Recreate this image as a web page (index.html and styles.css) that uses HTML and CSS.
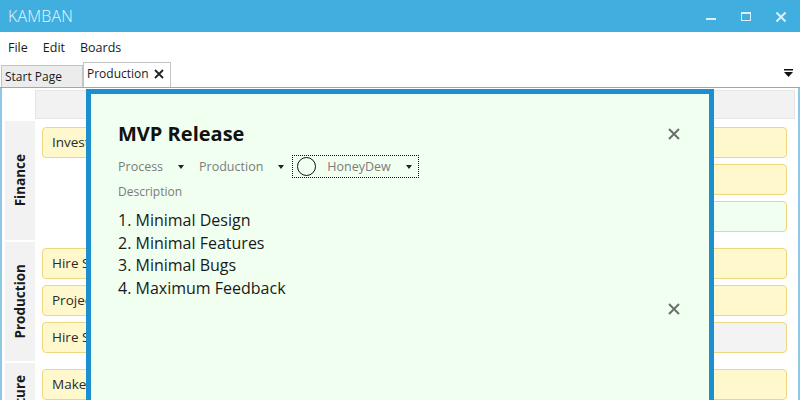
FILE: index.html
```html
<!DOCTYPE html>
<html lang="en">
<head>
    <meta charset="UTF-8">
    <title>Kamban</title>
    <link rel="stylesheet" href="styles.css">
</head>
<body>

    <div class="titlebar">
        <span class="app-name">KAMBAN</span>
        <div class="win-controls">
            <svg width="12" height="12" viewBox="0 0 12 12"><rect x="1" y="7" width="10" height="2" fill="#dcf0fa"/></svg>
            <svg width="12" height="12" viewBox="0 0 12 12"><rect x="1.5" y="1.5" width="9" height="8" fill="none" stroke="#dcf0fa"/><rect x="1" y="1" width="10" height="2" fill="#dcf0fa"/></svg>
            <svg width="12" height="12" viewBox="0 0 12 12"><path d="M1.5 1.5 L10.5 10.5 M10.5 1.5 L1.5 10.5" stroke="#dcf0fa" stroke-width="2"/></svg>
        </div>
    </div>

    <div class="menubar">
        <span>File</span>
        <span>Edit</span>
        <span>Boards</span>
    </div>

    <div class="tabstrip">
        <div class="tab">Start Page</div>
        <div class="tab active">Production
            <svg width="10" height="10" viewBox="0 0 10 10"><path d="M1 1 L9 9 M9 1 L1 9" stroke="#222" stroke-width="1.8"/></svg>
        </div>
        <div class="tab-overflow">
            <svg width="9" height="8" viewBox="0 0 9 8"><rect x="0" y="0" width="9" height="1.5" fill="#111"/><path d="M0 3 L9 3 L4.5 8 Z" fill="#111"/></svg>
        </div>
    </div>

    <div class="board">
        <div class="board-head">
            <div class="corner"></div>
            <div class="col-head"></div>
        </div>

        <div class="lane">
            <div class="lane-label"><span>Finance</span></div>
            <div class="cell">
                <div class="card">Investors meeting</div>
            </div>
            <div class="cell">
                <div class="card">Budget review</div>
            </div>
            <div class="cell">
                <div class="card">Quarterly report</div>
                <div class="card">Pay invoices</div>
                <div class="card honeydew">MVP Release</div>
            </div>
        </div>

        <div class="lane">
            <div class="lane-label"><span>Production</span></div>
            <div class="cell">
                <div class="card">Hire Staff</div>
                <div class="card">Project plan</div>
                <div class="card">Hire Support</div>
            </div>
            <div class="cell">
                <div class="card">Prototype</div>
            </div>
            <div class="cell">
                <div class="card">Testing</div>
                <div class="card">Deploy</div>
                <div class="card gray">Documentation</div>
            </div>
        </div>

        <div class="lane short">
            <div class="lane-label"><span>Future</span></div>
            <div class="cell">
                <div class="card">Make roadmap</div>
            </div>
            <div class="cell"></div>
            <div class="cell">
                <div class="card">Version 2</div>
            </div>
        </div>

        <div class="modal">
            <div class="modal-head">
                <h1>MVP Release</h1>
                <button class="close-btn">
                    <svg width="12" height="12" viewBox="0 0 12 12"><path d="M1 1 L11 11 M11 1 L1 11" stroke="#6e6e6e" stroke-width="2"/></svg>
                </button>
            </div>

            <div class="selectors">
                <div class="select">Process <span class="arrow"></span></div>
                <div class="select">Production <span class="arrow"></span></div>
                <div class="select color-pick">
                    <span class="swatch"></span>
                    HoneyDew <span class="arrow"></span>
                </div>
            </div>

            <div class="field-label">Description</div>

            <div class="desc-row">
                <ol class="desc">
                    <li>Minimal Design</li>
                    <li>Minimal Features</li>
                    <li>Minimal Bugs</li>
                    <li>Maximum Feedback</li>
                </ol>
                <button class="close-btn bottom">
                    <svg width="12" height="12" viewBox="0 0 12 12"><path d="M1 1 L11 11 M11 1 L1 11" stroke="#6e6e6e" stroke-width="2"/></svg>
                </button>
            </div>
        </div>
    </div>

</body>
</html>
```

FILE: styles.css
```css
body {
    margin: 0;
    width: 800px;
    height: 400px;
    overflow: hidden;
    font-family: "Open Sans", "Noto Sans", sans-serif;
    color: #1a1a1a;
    background: #ffffff;
}
.titlebar {
    height: 32px;
    background: #41aee0;
    display: flex;
    align-items: center;
    justify-content: space-between;
    padding-left: 8px;
}
.app-name {
    color: #e6f6ff;
    font-size: 16px;
    font-weight: 300;
    letter-spacing: 0.2px;
}
.win-controls {
    display: flex;
    gap: 23px;
    padding-right: 13px;
    padding-top: 2px;
}
.menubar {
    height: 30px;
    display: flex;
    align-items: center;
    gap: 15px;
    padding-left: 8px;
    font-size: 12.5px;
}
.tabstrip {
    height: 25px;
    display: flex;
    align-items: flex-end;
    border-bottom: 1px solid #a6a6a6;
    position: relative;
}
.tab {
    height: 22px;
    box-sizing: border-box;
    padding: 0 20px 0 3px;
    font-size: 12px;
    line-height: 22px;
    background: #ececec;
    border: 1px solid #c4c4c4;
    border-bottom: none;
    margin-left: 1px;
}
.tab.active {
    height: 25px;
    line-height: 22px;
    background: #ffffff;
    display: flex;
    align-items: flex-start;
    gap: 5px;
    padding: 0 6px 0 3px;
    margin-left: 0;
}
.tab.active svg {
    margin-top: 6px;
}
.tab-overflow {
    margin-left: auto;
    padding: 0 7px 5px 0;
}
.board {
    position: relative;
    height: 320px;
    padding: 2px 3px 0 3px;
    border-left: 2px solid #8ec8e6;
    border-right: 2px solid #8ec8e6;
}
.board-head {
    display: grid;
    grid-template-columns: 30px 1fr;
    height: 29px;
}
.col-head {
    background: #f2f2f2;
    border: 1px solid #e6e6e6;
}
.lane {
    display: grid;
    grid-template-columns: 30px 1fr 1fr 1fr;
    margin-top: 2px;
    min-height: 118px;
}
.lane.short {
    min-height: 70px;
}
.lane-label {
    background: #f2f2f2;
    display: flex;
    align-items: center;
    justify-content: center;
}
.lane-label span {
    writing-mode: vertical-rl;
    transform: rotate(180deg);
    font-weight: bold;
    font-size: 13.5px;
}
.cell {
    display: flex;
    flex-direction: column;
    gap: 6px;
    padding: 6px 8px 8px 7px;
}
.card {
    height: 31px;
    box-sizing: border-box;
    background: #fff8cc;
    border: 1px solid #efd77e;
    border-radius: 4px;
    padding-left: 9px;
    font-size: 13.5px;
    line-height: 29px;
    color: #2a2a2a;
    white-space: nowrap;
    overflow: hidden;
}
.card.honeydew {
    background: #f0fff0;
}
.card.gray {
    background: #f3f3f3;
}
.modal {
    position: absolute;
    left: 84px;
    top: 1px;
    width: 628px;
    height: 330px;
    box-sizing: border-box;
    background: #f0fff0;
    border: 5px solid #1b8fd0;
    padding: 26px 29px 0 27px;
}
.modal-head {
    display: flex;
    justify-content: space-between;
    align-items: center;
}
h1 {
    margin: 0;
    font-size: 20px;
    font-weight: bold;
    color: #111;
}
.close-btn {
    border: none;
    background: none;
    padding: 0;
    display: flex;
}
.selectors {
    display: flex;
    align-items: center;
    margin-top: 8px;
    font-size: 12.5px;
    color: #7c7c7c;
}
.select {
    display: flex;
    align-items: center;
    margin-right: 15px;
}
.arrow {
    width: 0;
    height: 0;
    border-left: 3.5px solid transparent;
    border-right: 3.5px solid transparent;
    border-top: 4px solid #222;
    margin-left: 15px;
}
.color-pick {
    border: 1px dotted #111;
    height: 23px;
    box-sizing: border-box;
    padding: 0 6px 0 4px;
    margin-right: 0;
    margin-left: -7px;
}
.swatch {
    width: 17px;
    height: 17px;
    border: 1px solid #111;
    border-radius: 50%;
    margin-right: 11px;
}
.field-label {
    margin-top: 5px;
    font-size: 12px;
    color: #7c7c7c;
}
.desc-row {
    display: flex;
    justify-content: space-between;
    min-height: 106px;
    margin-top: 9px;
}
.desc {
    margin: 0;
    padding-left: 0;
    list-style-position: inside;
    font-size: 16px;
    line-height: 22.5px;
}
.close-btn.bottom {
    align-self: flex-end;
}
```
